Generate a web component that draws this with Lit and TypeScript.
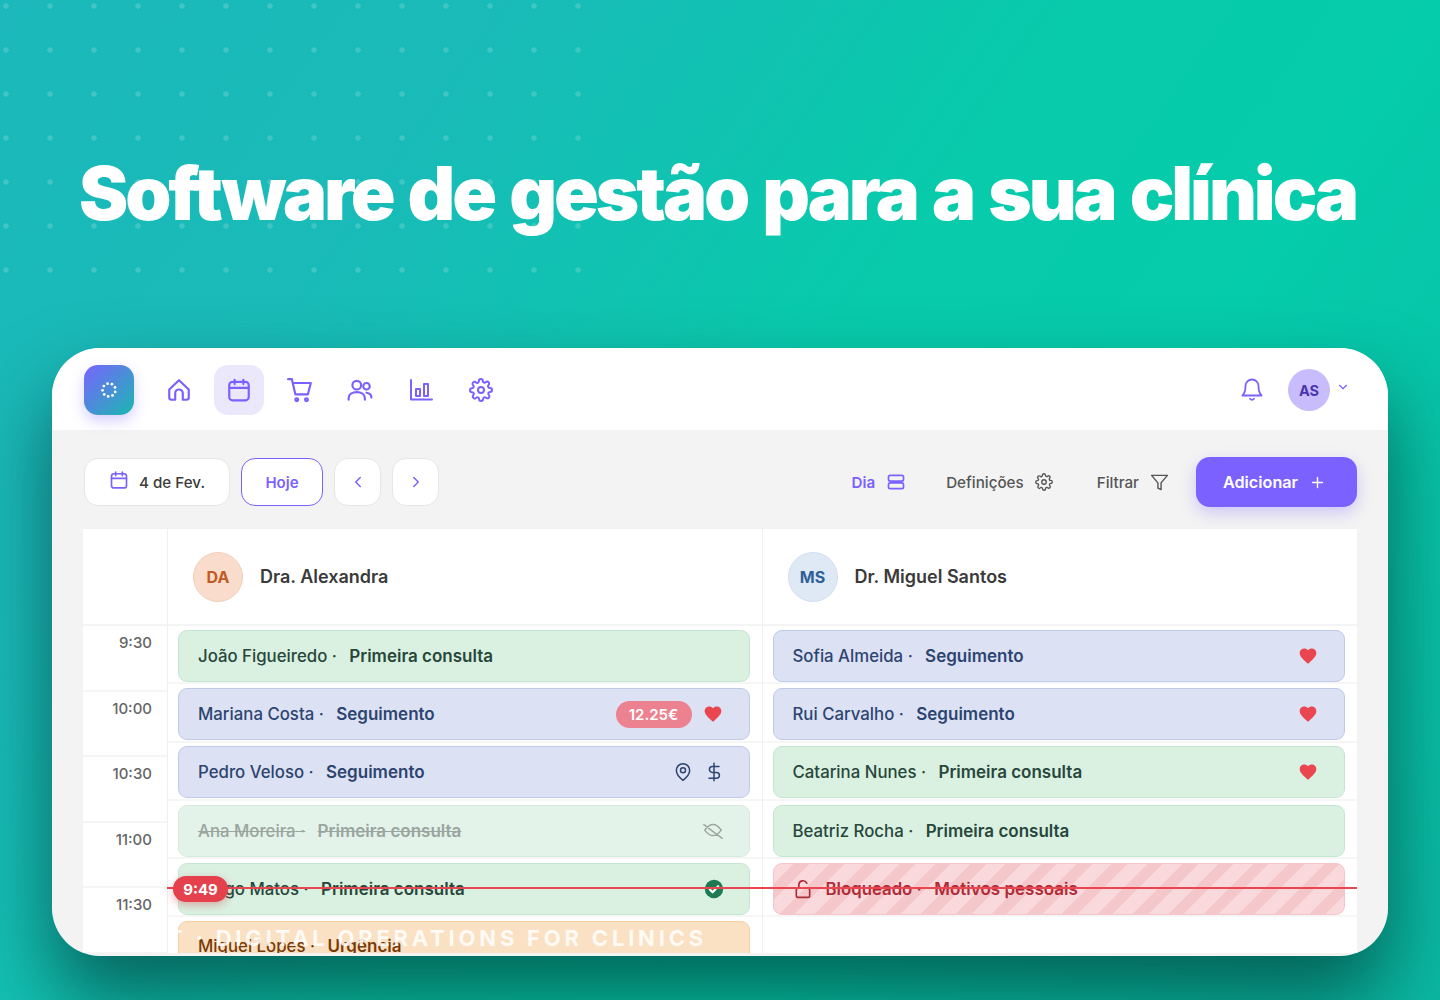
import { LitElement, html, css, svg } from "lit";
import { customElement } from "lit/decorators.js";

const ic = (body: unknown, size = 24, sw = 2, cls = "") => html`<svg class=${cls} width=${size} height=${size} viewBox="0 0 24 24" fill="none" stroke="currentColor" stroke-width=${sw} stroke-linecap="round" stroke-linejoin="round">${body}</svg>`;

const home = svg`<path d="M3 11.500 12 3l9 8.500V19a2 2 0 0 1-2 2h-3.500v-6a3.500 3.500 0 0 0-7 0v6H5a2 2 0 0 1-2-2z"/>`;
const cal = svg`<rect x="3" y="4.500" width="18" height="17" rx="3"/><path d="M8 2.500v4M16 2.500v4M3 10h18"/>`;
const cart = svg`<path d="M1 2h3.500l3.200 14h11.600l2.700-10.500H5.300"/><circle cx="9" cy="21" r="1.300"/><circle cx="18" cy="21" r="1.300"/>`;
const users = svg`<circle cx="9" cy="7.500" r="4"/><path d="M1.500 21v-1.500C1.500 16 5 14 9 14s7.500 2 7.500 5.500V21"/><circle cx="18" cy="8.500" r="3"/><path d="M18 14.500c2.500.3 4.500 2 4.500 4.500"/>`;
const chart = svg`<path d="M2 2v19.500h21"/><rect x="7" y="11" width="4" height="7"/><rect x="15" y="6" width="4" height="12"/>`;
const gear = svg`<circle cx="12" cy="12" r="3"/><path d="M19.400 15a1.650 1.650 0 0 0 .33 1.820l.06.06a2 2 0 1 1-2.830 2.830l-.06-.06a1.650 1.650 0 0 0-2.800 1.170V21a2 2 0 1 1-4 0v-.09a1.650 1.650 0 0 0-2.880-1.110l-.06.06a2 2 0 1 1-2.830-2.830l.06-.06a1.650 1.650 0 0 0-1.170-2.800H3a2 2 0 1 1 0-4h.09A1.650 1.650 0 0 0 4.200 7.290l-.06-.06a2 2 0 1 1 2.830-2.830l.06.06A1.650 1.650 0 0 0 9.830 3.290V3a2 2 0 1 1 4 0v.09a1.650 1.650 0 0 0 2.800 1.170l.06-.06a2 2 0 1 1 2.830 2.830l-.06.06a1.650 1.650 0 0 0 1.170 2.800H21a2 2 0 1 1 0 4h-.09a1.650 1.650 0 0 0-1.510 1.110z"/>`;
const bell = svg`<path d="M12 2.500a6.500 6.500 0 0 0-6.500 6.500c0 6-2.500 9-3 9.500h19c-.5-.5-3-3.500-3-9.500A6.500 6.500 0 0 0 12 2.500z"/><path d="M10 21.800a2.500 2.500 0 0 0 4 0"/>`;
const heart = svg`<path fill="currentColor" stroke="none" d="M12 21.300 10.500 20C5.400 15.400 2 12.300 2 8.500 2 5.400 4.400 3 7.500 3c1.700 0 3.400.8 4.500 2.100C13.100 3.800 14.800 3 16.500 3 19.600 3 22 5.400 22 8.500c0 3.800-3.400 6.900-8.500 11.500z"/>`;

interface Ev { n: string; t: string; k: string; extra?: unknown }

const fill = (c: string) => html`<span class="heart" style="color:${c}">${ic(heart, 20)}</span>`;

const col1: Ev[] = [
  { n: "João Figueiredo", t: "Primeira consulta", k: "g" },
  { n: "Mariana Costa", t: "Seguimento", k: "b", extra: html`<span class="price">12.25€</span>${fill("#e9464f")}` },
  { n: "Pedro Veloso", t: "Seguimento", k: "b", extra: html`
    <span class="eicon">${ic(svg`<path d="M20 10c0 6-8 12-8 12s-8-6-8-12a8 8 0 0 1 16 0z"/><circle cx="12" cy="10" r="3"/>`, 20, 1.800)}</span>
    <span class="eicon gap">${ic(svg`<path d="M12 1.500v21M18 5.500h-8a3.500 3.500 0 0 0 0 7h5a3.500 3.500 0 0 1 0 7H6"/>`, 20, 1.800)}</span>` },
  { n: "Ana Moreira", t: "Primeira consulta", k: "x", extra: html`<span class="eicon">${ic(svg`<path d="M2 5l20 15M3 11c3-4 6-6 9-6s6 2 9 6M3 11c3 4 6 6 9 6s6-2 9-6"/>`, 22, 1.600)}</span>` },
  { n: "Diogo Matos", t: "Primeira consulta", k: "g", extra: html`<span class="check">${ic(svg`<circle cx="12" cy="12" r="10" fill="#1f7a54" stroke="none"/><path d="M7.500 12.500l3 3 6-6.500" stroke="#fff" stroke-width="2.500"/>`, 22)}</span>` },
  { n: "Miguel Lopes", t: "Urgência", k: "o" },
];
const col2: Ev[] = [
  { n: "Sofia Almeida", t: "Seguimento", k: "b", extra: fill("#e9464f") },
  { n: "Rui Carvalho", t: "Seguimento", k: "b", extra: fill("#e9464f") },
  { n: "Catarina Nunes", t: "Primeira consulta", k: "g", extra: fill("#e9464f") },
  { n: "Beatriz Rocha", t: "Primeira consulta", k: "g" },
  { n: "Bloqueado", t: "Motivos pessoais", k: "r" },
];

@customElement("app-root")
export class AppRoot extends LitElement {
  static styles = css`
    :host { display: block; position: relative; width: 1440px; height: 1000px; overflow: hidden;
      font-family: Inter, "Liberation Sans", sans-serif;
      background: linear-gradient(125deg, #1cb8bb 0%, #19bbb8 24%, #08cbab 50%, #05ccab 68%, #0bb8a2 100%); }
    .dots { position: absolute; left: 0; top: 0; width: 600px; height: 290px;
      background-image: radial-gradient(circle at 6px 6px, rgba(255,255,255,.16) 2.500px, transparent 3px);
      background-size: 44px 44px; }
    h1 { position: relative; margin: 0; padding: 150px 0 0 79px; font-size: 74px; line-height: 86px; height: 198px; box-sizing: content-box; color: #fff; font-weight: 900; letter-spacing: -3.100px; word-spacing: 3.500px; white-space: nowrap; }
    .card { position: relative; margin: 0 0 0 52px; width: 1336px; height: 608px; border-radius: 48px; background: #f3f3f3; overflow: hidden; }
    .shadow { position: absolute; left: 52px; top: 348px; width: 1336px; height: 608px; border-radius: 48px; box-shadow: 0 44px 80px rgba(0,40,40,.62); }
    .top { height: 82px; background: #fff; display: flex; align-items: center; padding: 2px 38px 0 32px; box-sizing: border-box; }
    .logo { width: 50px; height: 50px; border-radius: 14px; background: linear-gradient(135deg, #7a63ff, #1ab8b0); display: flex; align-items: center; justify-content: center; box-shadow: 0 6px 14px rgba(122,99,255,.3); margin-right: 20px; }
    .nav { display: flex; width: 50px; height: 50px; align-items: center; justify-content: center; color: #7b61ff; border-radius: 14px; margin-right: 10.400px; }
    .nav.on { background: #ece8fc; }
    .sp { flex: 1; }
    .bell { color: #7b61ff; display: flex; margin-right: 24px; margin-top: -2px; }
    .av { width: 42px; height: 42px; border-radius: 50%; background: #c8bcfd; color: #4a35b0; font-weight: 700; font-size: 14.500px; display: flex; align-items: center; justify-content: center; margin-right: 6px; }
    .chev { color: #7b61ff; display: flex; margin-top: -6px; }
    .tools { display: flex; align-items: center; height: 98px; padding: 6px 31px 0 32px; box-sizing: border-box; }
    .btn { height: 48px; box-sizing: border-box; background: #fff; border: 1px solid #e6e6e6; border-radius: 14px; display: flex; align-items: center; justify-content: center; color: #7b61ff; font-size: 15px; }
    .date { width: 146px; color: #3c3c3c; font-weight: 500; font-size: 15.200px; gap: 10px; margin-right: 11px; }
    .date svg { color: #7b61ff; margin-top: -4px; }
    .hoje { width: 82px; border-color: #7b61ff; font-weight: 600; margin-right: 11px; }
    .sq { width: 47px; margin-right: 11px; }
    .tool { display: flex; align-items: center; font-size: 15.200px; font-weight: 500; color: #555; gap: 11px; margin-right: 44px; }
    .tool.dia { color: #7b61ff; font-weight: 600; margin-right: 40px; }
    .tool.fil { margin-right: 43px; }
    .add { width: 161px; height: 50px; border-radius: 14px; background: #7b61ff; color: #fff; font-weight: 600; font-size: 16.200px; display: flex; align-items: center; justify-content: center; gap: 11px; padding-right: 4px; box-sizing: border-box; box-shadow: 0 6px 16px rgba(123,97,255,.3); margin-left: -16px; }
    .panel { position: relative; margin-left: 31px; width: 1274px; height: 424px; background: #fff; display: grid; grid-template-columns: 85px 1fr 1fr; overflow: hidden; border-top: 1px solid #f1f1f1; box-sizing: content-box; }
    .timec { border-right: 1px solid #efefef; }
    .head { height: 97px; border-bottom: 2px solid #f4f4f4; display: flex; align-items: center; box-sizing: border-box; padding-left: 25px; gap: 17px; font-size: 18px; font-weight: 600; color: #3a3a3a; }
    .timec .head { padding: 0; }
    .cav { width: 50px; height: 50px; box-sizing: border-box; border-radius: 50%; display: flex; align-items: center; justify-content: center; font-size: 16px; font-weight: 700; }
    .cav.da { background: #f9dccb; color: #c25a23; border: 1px solid #f0d0bc; }
    .cav.ms { background: #dfe9f6; color: #2f5f97; border: 1px solid #d1deef; }
    .slot { height: 65.600px; border-bottom: 2px solid #f5f5f5; box-sizing: border-box; padding: 7px 15px 0 0; text-align: right; font-size: 15px; color: #666; font-weight: 500; }
    .col { border-right: 1px solid #efefef; }
    .col.c2 { border-right: 0; }
    .row { height: 58.300px; border-bottom: 2px solid #f6f6f6; box-sizing: border-box; padding: 3.800px 12px 0 10px; }
    .ev { height: 52px; box-sizing: border-box; border: 1px solid; border-radius: 9px; display: flex; align-items: center; padding: 0 26px 0 19px; font-size: 16.800px; font-weight: 500; white-space: nowrap; }
    .ev b { font-size: 17px; font-weight: 600; margin-left: 12.400px; }
    .ev.g { background: #daf1e2; border-color: #c3e6d1; color: #27473a; }
    .ev.b { background: #dce2f4; border-color: #bfc9e8; color: #2d4470; }
    .ev.x { background: #e3f3e9; border-color: #d3ebdc; color: #9aa59f; }
    .ev.x span.nm { text-decoration: line-through; } .ev.x b { text-decoration: line-through; }
    .ev.o { background: #fbe1c3; border-color: #f6cfa3; color: #7a3a06; align-items: flex-start; padding-top: 14px; height: 60px; }
    .ev.r { background: repeating-linear-gradient(135deg, #f9d9dc 0 14px, #f4c7ca 14px 25px); border-color: #f6c4c8; color: #b02a37; font-weight: 600; }
    .ev.r .lock { display: flex; margin-right: 13px; }
    .right { margin-left: auto; display: flex; align-items: center; }
    .price { background: #ec8290; color: #fff; border-radius: 14px; width: 76px; height: 27px; display: flex; align-items: center; justify-content: center; font-size: 15px; font-weight: 600; margin-right: 11px; }
    .heart, .eicon, .check { display: flex; }
    .eicon { margin-right: -1px; }
    .check { margin-right: -2px; }
    .gap { margin-left: 12px; }
    .now { position: absolute; left: 84px; right: 0; top: 358px; height: 2px; background: #e9464f; }
    .pill { position: absolute; left: 90px; top: 347px; width: 55px; height: 26px; border-radius: 13px; background: #e4414c; color: #fff; font-size: 15px; font-weight: 700; display: flex; align-items: center; justify-content: center; box-shadow: 0 3px 8px rgba(200,40,50,.35); }
    .band { position: absolute; left: 116px; top: 577px; font-size: 22px; font-weight: 700; letter-spacing: 3.800px; color: rgba(255,255,255,.85); white-space: nowrap; }
  `;
  private ev(e: Ev) {
    const lock = e.k === "r" ? html`<span class="lock">${ic(svg`<rect x="4" y="11" width="16" height="11" rx="2"/><path d="M7 11V7a5 5 0 0 1 9.500-2"/>`, 20, 2)}</span>` : "";
    return html`<div class="row"><div class="ev ${e.k}">${lock}<span class="nm">${e.n} ·</span><b>${e.t}</b>${e.extra ? html`<span class="right">${e.extra}</span>` : ""}</div></div>`;
  }
  render() {
    const times = ["9:30", "10:00", "10:30", "11:00", "11:30"];
    return html`
      <div class="dots"></div>
      <div class="shadow"></div>
      <h1>Software de gestão para a sua clínica</h1>
      <div class="card">
        <div class="top">
          <div class="logo"><svg width="18" height="18" viewBox="0 0 18 18" fill="#fff">${[0,1,2,3,4,5,6,7,8].map(i => svg`<circle cx=${9 + 6.500 * Math.cos(i * 0.698 + .3)} cy=${9 + 6.500 * Math.sin(i * 0.698 + .3)} r="1.400"/>`)}</svg></div>
          <div class="nav">${ic(home, 26, 2)}</div>
          <div class="nav on">${ic(cal, 26, 2)}</div>
          <div class="nav">${ic(cart, 26, 2)}</div>
          <div class="nav">${ic(users, 26, 2)}</div>
          <div class="nav">${ic(chart, 24, 2)}</div>
          <div class="nav">${ic(gear, 24, 2)}</div>
          <div class="sp"></div>
          <div class="bell">${ic(bell, 24, 1.800)}</div>
          <div class="av">AS</div>
          <div class="chev">${ic(svg`<path d="M6 9l6 6 6-6"/>`, 14, 2)}</div>
        </div>
        <div class="tools">
          <div class="btn date">${ic(cal, 20, 2)}<span>4 de Fev.</span></div>
          <div class="btn hoje">Hoje</div>
          <div class="btn sq">${ic(svg`<path d="M15 6l-6 6 6 6"/>`, 18, 2)}</div>
          <div class="btn sq">${ic(svg`<path d="M9 6l6 6-6 6"/>`, 18, 2)}</div>
          <div class="sp"></div>
          <div class="tool dia">Dia ${ic(svg`<rect x="3" y="4" width="18" height="7" rx="2"/><rect x="3" y="13" width="18" height="7" rx="2"/>`, 20, 2)}</div>
          <div class="tool">Definições ${ic(gear, 18, 1.800)}</div>
          <div class="tool fil">Filtrar ${ic(svg`<path d="M22 3H2l8 9.500V19l4 2v-8.500z"/>`, 19, 1.800)}</div>
          <div class="add">Adicionar ${ic(svg`<path d="M12 5v14M5 12h14"/>`, 17, 2)}</div>
        </div>
        <div class="panel">
          <div class="timec">
            <div class="head"></div>
            ${times.map(t => html`<div class="slot">${t}</div>`)}
          </div>
          <div class="col">
            <div class="head"><div class="cav da">DA</div>Dra. Alexandra</div>
            ${col1.map(e => this.ev(e))}
          </div>
          <div class="col c2">
            <div class="head"><div class="cav ms">MS</div>Dr. Miguel Santos</div>
            ${col2.map(e => this.ev(e))}
            <div class="row"></div>
          </div>
          <div class="now"></div>
          <div class="pill">9:49</div>
        </div>
        <div class="band">T · DIGITAL OPERATIONS FOR CLINICS</div>
      </div>
    `;
  }
}
